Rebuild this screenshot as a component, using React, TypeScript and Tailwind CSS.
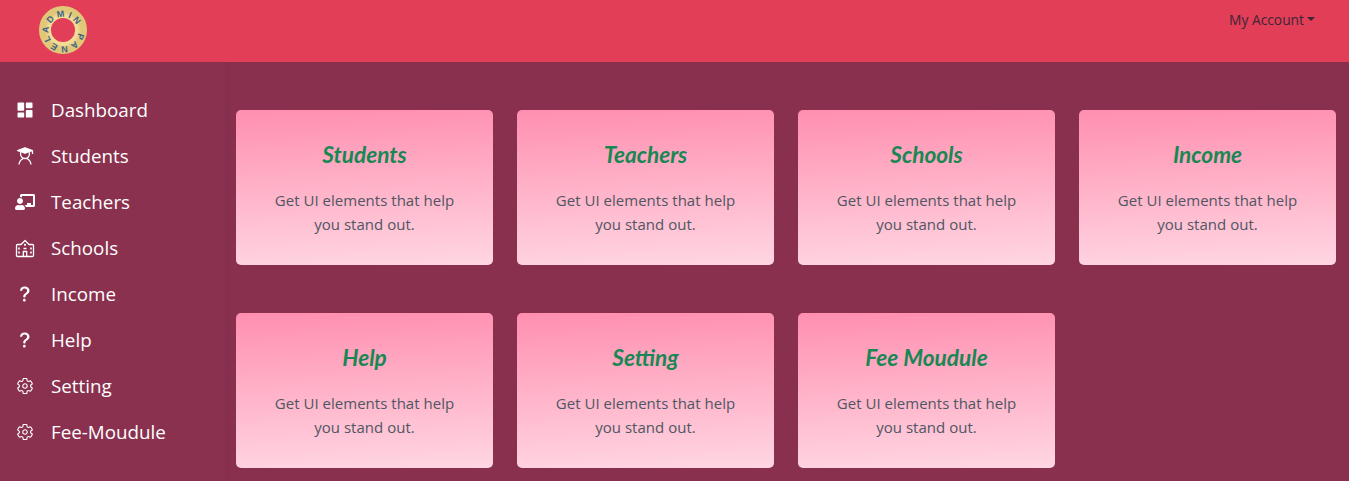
import React from 'react';
import { BiSolidDashboard } from 'react-icons/bi';
import { BsQuestionLg } from 'react-icons/bs';
import { FaChalkboardTeacher } from 'react-icons/fa';
import { IoSettingsOutline } from 'react-icons/io5';

const StudentIcon = () => (
  <svg width="20" height="20" viewBox="0 0 20 20" fill="none" stroke="white" strokeWidth="1.3">
    <path d="M2 4.600 10 1.600l8 3-8 2.800z" fill="white" stroke="white" strokeWidth="0.8" strokeLinejoin="round" />
    <path d="M5.500 6.200c-.2 4 1.400 6.300 4.500 6.300s4.700-2.300 4.500-6.300" />
    <path d="M4 18.500c.3-2.600 2-4.900 4.200-5.800M16 18.500c-.3-2.600-2-4.900-4.200-5.800" />
    <path d="M17.500 5v3" />
  </svg>
);

const SchoolIcon = () => (
  <svg width="20" height="20" viewBox="0 0 20 20" fill="none" stroke="white" strokeWidth="1.300" strokeLinejoin="round">
    <path d="M1.500 17.500V7.500q0-1 1-1h3.500L10 2.500l4 4h3.500q1 0 1 1v10q0 1-1 1h-15q-1 0-1-1z" />
    <circle cx="10" cy="6.800" r="1.100" fill="white" stroke="none" />
    <path d="M8.300 18v-4.500h3.400V18" />
    <path d="M8.500 10.500h3M4 9.500v2M4 13.500v2M16 9.500v2M16 13.500v2" strokeWidth="1.600" />
  </svg>
);

const navItems = [
  { label: 'Dashboard', icon: <BiSolidDashboard size={20} /> },
  { label: 'Students', icon: <StudentIcon /> },
  { label: 'Teachers', icon: <FaChalkboardTeacher size={20} /> },
  { label: 'Schools', icon: <SchoolIcon /> },
  { label: 'Income', icon: <BsQuestionLg size={20} /> },
  { label: 'Help', icon: <BsQuestionLg size={20} /> },
  { label: 'Setting', icon: <IoSettingsOutline size={18} /> },
  { label: 'Fee-Moudule', icon: <IoSettingsOutline size={18} /> },
];

const cards = ['Students', 'Teachers', 'Schools', 'Income', 'Help', 'Setting', 'Fee Moudule'];

const Logo = () => (
  <svg width="48" height="48" viewBox="0 0 48 48">
    <defs>
      <radialGradient id="ring" cx="50%" cy="50%" r="50%">
        <stop offset="50%" stopColor="#efd98a" />
        <stop offset="80%" stopColor="#f4dd96" />
        <stop offset="100%" stopColor="#e0c878" />
      </radialGradient>
      <path id="ringText" d="M9.500 27 A14.800 14.800 0 1 1 9.510 27.100" />
    </defs>
    <circle cx="24" cy="24" r="18" fill="none" stroke="url(#ring)" strokeWidth="12" />
    <text fontSize="9" fontWeight="700" fill="#3f6288" fontFamily="'Liberation Sans', sans-serif">
      <textPath href="#ringText" textLength="90" lengthAdjust="spacing">ADMIN PANEL</textPath>
    </text>
  </svg>
);

const Card = ({ title }: { title: string }) => (
  <div className="h-[155px] rounded-[5px] bg-[linear-gradient(178deg,#ff8fb0_0%,#ffd6e2_100%)] px-4 pt-[30px] text-center">
    <h5 className="font-['Lato',sans-serif] text-[22.6px] font-bold italic leading-[30px] text-[#198754]">{title}</h5>
    <p className="mt-[18px] text-[15px] leading-6 tracking-[0.02px] text-[#4f5663]">
      Get UI elements that help
      <br />
      you stand out.
    </p>
  </div>
);

export default function App() {
  return (
    <div className="h-[481px] w-[1351px] overflow-hidden bg-white pr-[2px] font-['Open_Sans',sans-serif]">
      <header className="flex h-[62px] items-start justify-between bg-[#e23e57] pl-[39px] pr-[34px] pt-[6px]">
        <Logo />
        <div className="mt-[5px] flex items-center gap-[3px] text-[13.8px] leading-[18px] text-[#3b2536]">
          My Account
          <span className="mb-[3px] border-x-[4px] border-t-[4px] border-x-transparent border-t-[#3b2536]" />
        </div>
      </header>
      <div className="flex h-[419px] bg-[#88304e]">
        <aside className="w-[225px] shrink-0 bg-[#8a314f] pt-[25px] shadow-[4px_0_6px_rgba(0,0,0,0.02)]">
          <ul className="flex flex-col">
            {navItems.map((item) => (
              <li key={item.label} className="flex h-[46px] items-center text-[18.8px] text-white">
                <span className="flex w-[51px] justify-center pr-[1px]">{item.icon}</span>
                {item.label}
              </li>
            ))}
          </ul>
        </aside>
        <main className="grid flex-1 grid-cols-[repeat(4,257px)] content-start gap-x-6 gap-y-12 pl-[11px] pt-12">
          {cards.map((title) => (
            <Card key={title} title={title} />
          ))}
        </main>
      </div>
    </div>
  );
}
